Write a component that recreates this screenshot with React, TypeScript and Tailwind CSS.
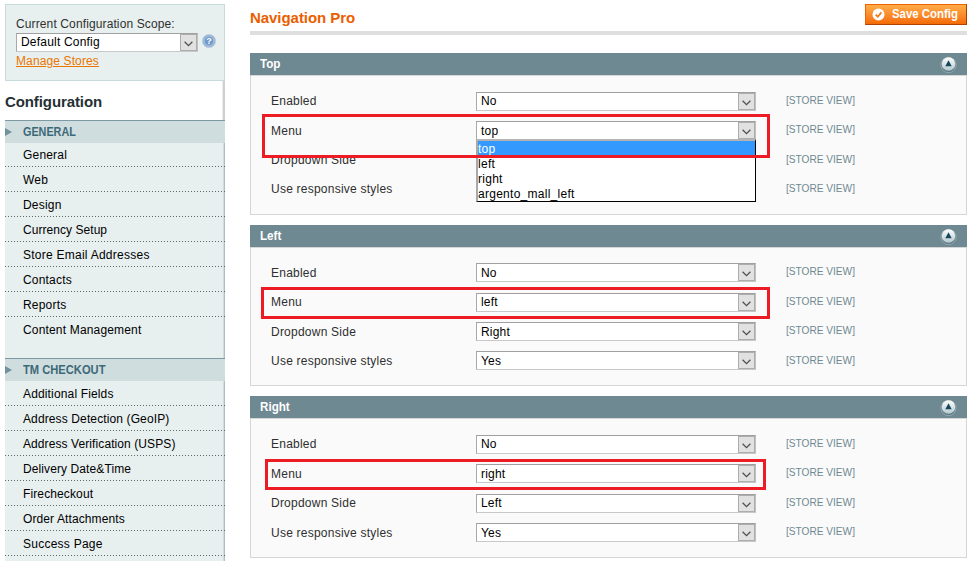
const general = [
  ["General", "h-[24px]", "tracking-[0.19px]"],
  ["Web", "h-[25px] pt-px", "tracking-[0.19px]"],
  ["Design", "h-[25px] pt-px", "tracking-[0.19px]"],
  ["Currency Setup", "h-[25px] pt-px", "tracking-[0.05px]"],
  ["Store Email Addresses", "h-[25px] pt-px", "tracking-[0.25px]"],
  ["Contacts", "h-[25px] pt-px", "tracking-[0.19px]"],
  ["Reports", "h-[25px] pt-px", "tracking-[0.19px]"],
];
const checkout = [
  ["Additional Fields", "tracking-[0.15px]"],
  ["Address Detection (GeoIP)", "tracking-[0.12px]"],
  ["Address Verification (USPS)", "tracking-[0.09px]"],
  ["Delivery Date&Time", "tracking-[0.1px]"],
  ["Firecheckout", "tracking-[0.12px]"],
  ["Order Attachments", "tracking-[0.1px]"],
  ["Success Page", "tracking-[0.25px]"],
];

function Chevron() {
  return (
    <span className="flex w-[17px] shrink-0 items-center justify-center border border-[#adadad] bg-[#e1e1e1]">
      <svg width="9" height="6" viewBox="0 0 9 6" className="mt-[2px]" fill="none" stroke="#505050" strokeWidth="1.3">
        <path d="M.6 .8 4.5 4.6 8.4 .8" />
      </svg>
    </span>
  );
}

function Select({ value, width, leading = "leading-[17px]" }: { value: string; width: string; leading?: string }) {
  return (
    <div className={`flex h-[19px] ${width} border border-b-[#c8c8c8] border-l-[#a9a9a9] border-r-[#c0c0c0] border-t-[#a0a0a0] bg-white`}>
      <span className={`flex-1 pl-[4px] text-[12px] tracking-[0.2px] text-black ${leading}`}>{value}</span>
      <Chevron />
    </div>
  );
}

function Dotted() {
  return (
    <svg width="220" height="1" className="block shrink-0" shapeRendering="crispEdges">
      <line x1="0" x2="220" y1=".5" y2=".5" stroke="#5f6767" strokeDasharray="1 2" />
    </svg>
  );
}

function NavHeader({ title, squeeze }: { title: string; squeeze: string }) {
  return (
    <div className="relative -mr-px flex h-[23px] items-center border-t border-[#7b9aa4] bg-[#d0dddf]">
      <svg width="7" height="8" viewBox="0 0 7 8">
        <path d="M0 0 7 4 0 8Z" fill="#6f929d" />
      </svg>
      <span className={`ml-[11px] inline-block origin-left text-[12px] font-bold leading-[14px] text-[#3c6978] ${squeeze}`}>{title}</span>
    </div>
  );
}

function NavItem({ label, height, tracking }: { label: string; height: string; tracking: string }) {
  return (
    <div className={`-mr-px flex flex-col ${height}`}>
      <span className={`flex flex-1 items-center pl-[18px] text-[12px] leading-[14px] text-black ${tracking}`}>{label}</span>
      <Dotted />
    </div>
  );
}

function CollapseIcon() {
  return (
    <svg width="17" height="17" viewBox="0 0 17 17">
      <defs>
        <linearGradient id="knob" x1="0" y1="0" x2="0" y2="1">
          <stop offset="0" stopColor="#ffffff" />
          <stop offset="1" stopColor="#b3c9ce" />
        </linearGradient>
      </defs>
      <circle cx="8.5" cy="9" r="7.6" fill="#5d7984" stroke="#9db2b8" strokeWidth=".8" />
      <circle cx="8.5" cy="8" r="6.8" fill="url(#knob)" />
      <path d="M8.5 4.3 11.7 10.2H5.3Z" fill="#17475a" />
    </svg>
  );
}

type Row = { label: string; value: string; gap: string; labelPad: string; scopePad: string; leading?: string };

function Section({ title, rows, height, pad, children }: { title: string; rows: Row[]; height: string; pad: string; children?: React.ReactNode }) {
  return (
    <section className="relative mb-[10px]">
      <header className="flex h-[22px] items-center justify-between bg-[#6f8992] pl-[10px] pr-[10px]">
        <h3 className="origin-left scale-x-[0.97] text-[12px] font-bold leading-[14px] text-white">{title}</h3>
        <CollapseIcon />
      </header>
      <div className={`border border-[#d6d6d6] bg-[#fafafa] pl-[20px] ${height} ${pad}`}>
        {rows.map((r) => (
          <div key={r.label} className={`flex ${r.gap}`}>
            <span className={`h-[19px] w-[205px] text-[12px] leading-[14px] tracking-[0.23px] text-[#2f2f2f] ${r.labelPad}`}>{r.label}</span>
            <Select value={r.value} width="w-[280px]" leading={r.leading} />
            <span className={`ml-[30px] inline-block h-[19px] origin-left scale-x-[0.92] whitespace-nowrap text-[11px] leading-[14px] text-[#6f8992] ${r.scopePad}`}>[STORE VIEW]</span>
          </div>
        ))}
      </div>
      {children}
    </section>
  );
}

export default function App() {
  return (
    <div className="flex h-[570px] w-[970px] overflow-hidden bg-white font-['Liberation_Sans',Arial,sans-serif]">
      <aside className="ml-[5px] w-[220px] pt-[4px]">
        <div className="h-[77px] border border-[#c8dbdc] bg-[#e7efef] pl-[10px] pt-[12px]">
          <div className="text-[12px] leading-[14px] tracking-[0.12px] text-[#2f2f2f]">Current Configuration Scope:</div>
          <div className="mt-[2px] flex items-start">
            <Select value="Default Config" width="w-[182px]" />
            <svg width="14" height="14" viewBox="0 0 14 14" className="ml-[4px] mt-px">
              <circle cx="7" cy="7" r="6.6" fill="#8fb0d3" stroke="#bccfe2" strokeWidth=".8" />
              <circle cx="7" cy="7" r="4.9" fill="#6f9aca" stroke="#c3d6ea" strokeWidth=".7" />
              <text x="7" y="10.2" textAnchor="middle" fontSize="9" fontWeight="bold" fill="#fff">?</text>
            </svg>
          </div>
          <a className="mt-[2px] block text-[12px] leading-[14px] tracking-[0.12px] text-[#ea7601] underline">Manage Stores</a>
        </div>
        <div className="h-[39px] border-r-2 border-[#cfcfcf] pt-[12px] shadow-[inset_-1px_0_0_#ececec]">
          <h2 className="text-[15px] font-bold leading-[18px] tracking-[-0.1px] text-[#253033]">Configuration</h2>
        </div>
        <nav className="h-[441px] border-r border-[#a9c0c4] bg-[#e7efef] shadow-[inset_-1px_0_0_#cfdddf]">
          <NavHeader title="GENERAL" squeeze="scale-x-[0.9]" />
          {general.map(([l, h, t]) => (
            <NavItem key={l} label={l} height={h} tracking={t} />
          ))}
          <div className="h-[41px] pl-[18px] pt-[6px] text-[12px] leading-[14px] tracking-[0.17px] text-black">Content Management</div>
          <NavHeader title="TM CHECKOUT" squeeze="scale-x-[0.93]" />
          {checkout.map(([l, t]) => (
            <NavItem key={l} label={l} height="h-[25px] pt-px" tracking={t} />
          ))}
        </nav>
      </aside>

      <main className="ml-[25px] w-[717px]">
        <div className="mb-[18px] flex h-[35px] items-start justify-between border-b-4 border-[#dfdfdf] pt-[4px]">
          <h1 className="pt-[5px] text-[15px] font-bold leading-[18px] tracking-[-0.05px] text-[#eb5e00]">Navigation Pro</h1>
          <button className="flex h-[21px] w-[102px] items-center border border-b-[#b04300] border-l-[#ed6502] border-r-[#a04300] border-t-[#ed6502] bg-linear-to-b from-[#ffac47] to-[#f46b00] pl-[6px] text-[12px] font-bold leading-[14px] text-white">
            <svg width="13" height="13" viewBox="0 0 13 13" className="mr-[7px] shrink-0">
              <circle cx="6.5" cy="6.5" r="6" fill="#fff" />
              <path d="M3.6 6.6 5.8 8.7 9.4 4.4" fill="none" stroke="#ee7b1c" strokeWidth="1.7" />
            </svg>
            <span className="mb-px inline-block origin-left scale-x-[0.95] whitespace-nowrap">Save Config</span>
          </button>
        </div>

        <Section
          title="Top"
          height="h-[140px]"
          pad="pt-[16px]"
          rows={[
            { label: "Enabled", value: "No", gap: "mb-[10px]", labelPad: "pt-[2px]", scopePad: "pt-[1px]" },
            { label: "Menu", value: "top", gap: "mb-[10px]", labelPad: "pt-[3px]", scopePad: "pt-[1px]", leading: "leading-[19px]" },
            { label: "Dropdown Side", value: "", gap: "mb-[11px]", labelPad: "pt-[3px]", scopePad: "pt-[2px]" },
            { label: "Use responsive styles", value: "", gap: "", labelPad: "pt-[2px]", scopePad: "pt-[1px]" },
          ]}
        >
          <div className="absolute left-[226px] top-[86px] h-[63px] w-[280px] border-b border-l-2 border-r border-t-2 border-b-black border-l-[#a9a9a9] border-r-black border-t-[#b4b4b4] bg-white text-[12px] leading-[15px] tracking-[0.27px] text-black">
            <div className="h-[15px] bg-[#3399ff] pt-px text-white">top</div>
            <div className="h-[15px] pt-px">left</div>
            <div className="h-[15px] pt-px">right</div>
            <div className="h-[15px] pt-px">argento_mall_left</div>
          </div>
          <div className="absolute left-[12px] top-[61px] h-[44px] w-[508px] border-[3px] border-[#ed1c24]" />
        </Section>

        <Section
          title="Left"
          height="h-[139px]"
          pad="pt-[15px]"
          rows={[
            { label: "Enabled", value: "No", gap: "mb-[11px]", labelPad: "pt-[3px]", scopePad: "pt-[1px]", leading: "leading-[19px]" },
            { label: "Menu", value: "left", gap: "mb-[10px]", labelPad: "pt-[2px]", scopePad: "pt-[1px]" },
            { label: "Dropdown Side", value: "Right", gap: "mb-[10px]", labelPad: "pt-[3px]", scopePad: "pt-[1px]", leading: "leading-[19px]" },
            { label: "Use responsive styles", value: "Yes", gap: "", labelPad: "pt-[3px]", scopePad: "pt-[2px]", leading: "leading-[19px]" },
          ]}
        >
          <div className="absolute left-[11px] top-[62px] h-[32px] w-[509px] border-[3px] border-[#ed1c24]" />
        </Section>

        <Section
          title="Right"
          height="h-[140px]"
          pad="pt-[16px]"
          rows={[
            { label: "Enabled", value: "No", gap: "mb-[10px]", labelPad: "pt-[2px]", scopePad: "pt-[1px]" },
            { label: "Menu", value: "right", gap: "mb-[11px]", labelPad: "pt-[3px]", scopePad: "pt-[1px]", leading: "leading-[19px]" },
            { label: "Dropdown Side", value: "Left", gap: "mb-[10px]", labelPad: "pt-[2px]", scopePad: "pt-[1px]" },
            { label: "Use responsive styles", value: "Yes", gap: "", labelPad: "pt-[3px]", scopePad: "pt-[1px]", leading: "leading-[19px]" },
          ]}
        >
          <div className="absolute left-[15px] top-[63px] h-[31px] w-[501px] border-[3px] border-[#ed1c24]" />
        </Section>
      </main>
    </div>
  );
}
